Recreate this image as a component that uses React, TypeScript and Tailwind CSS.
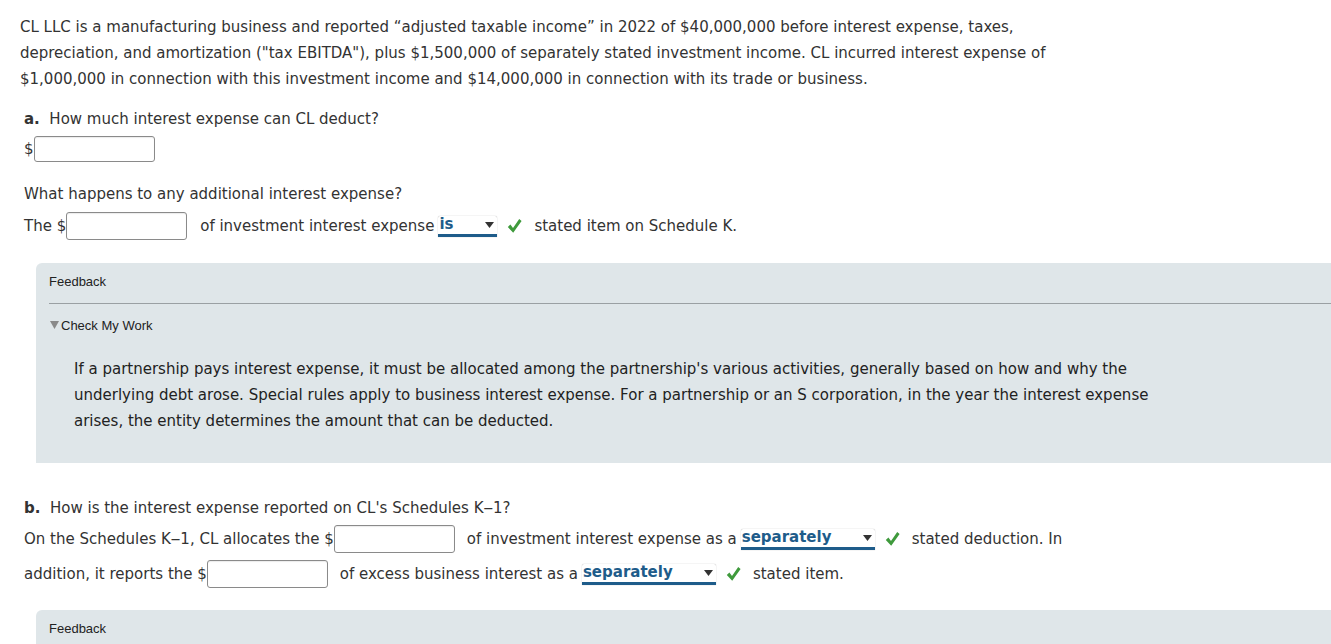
import { ReactNode } from 'react';

const bodyFont = { fontFamily: '"DejaVu Sans", Verdana, sans-serif' };

function AmountInput({ width = 'w-[121px]', height = 'h-[28px]' }: { width?: string; height?: string }) {
  return (
    <span className={`inline-block ${height} ${width} rounded-[3px] border border-[#8a8a8a] bg-white align-middle shadow-[inset_0_1px_1px_rgba(0,0,0,0.08)]`} />
  );
}

function Dropdown({ value, width }: { value: string; width: string }) {
  return (
    <span
      className={`inline-flex h-[21px] ${width} items-center justify-between rounded-t-[2px] border-b-[3px] border-[#1e5c8a] bg-white pr-[3px] align-middle shadow-[0_0_1px_rgba(0,0,0,0.4)]`}
    >
      <span className="pl-[1px] text-[15px] leading-none font-bold text-[#1e5c8a]">{value}</span>
      <svg width="9" height="6" viewBox="0 0 9 6" className="mt-[1px]">
        <path d="M0 0h9L4.5 6z" fill="#333" />
      </svg>
    </span>
  );
}

function Check() {
  return (
    <svg width="15" height="16" viewBox="0 0 15 16" className="mr-[12px] ml-[10px] inline-block align-middle">
      <path d="M0.8 9l2.6-2.4 2.6 3.3L12.2 1l2.4 1.9-8.4 11.8z" fill="#3f9a3c" />
    </svg>
  );
}

function FeedbackPanel({ children, open }: { children?: ReactNode; open?: boolean }) {
  return (
    <div className="ml-[36px] rounded-tl-[6px] bg-[#dfe6e9]" style={{ fontFamily: '"Liberation Sans", Arial, sans-serif' }}>
      <div className="px-[13px] pt-[9px] pb-[11px] text-[13px] text-[#222]">Feedback</div>
      {open && (
        <>
          <div className="ml-[13px] h-px bg-[#9aa0a3]" />
          <div className="flex items-center pt-[12px] pl-[14px] text-[13px] text-[#222]">
            <svg width="9" height="8" viewBox="0 0 9 8" className="mr-[2px]">
              <path d="M0 0h9L4.5 8z" fill="#8a8a8a" />
            </svg>
            Check My Work
          </div>
          {children}
        </>
      )}
    </div>
  );
}

export default function App() {
  return (
    <div className="min-h-screen bg-white pt-[14px] text-[15px] text-[#333]" style={bodyFont}>
      <p className="pr-[260px] pl-[20px] leading-[26px]">
        CL LLC is a manufacturing business and reported “adjusted taxable income” in 2022 of $40,000,000 before interest expense, taxes,
        depreciation, and amortization ("tax EBITDA"), plus $1,500,000 of separately stated investment income. CL incurred interest expense of
        $1,000,000 in connection with this investment income and $14,000,000 in connection with its trade or business.
      </p>

      <div className="mt-[16px] pl-[24px]">
        <div className="leading-[22px]">
          <span className="font-bold">a.</span>&nbsp; How much interest expense can CL deduct?
        </div>
        <div className="mt-[6px] flex items-center">
          <span>$</span>
          <AmountInput width="w-[121px]" height="h-[26px]" />
        </div>

        <div className="mt-[21px] leading-[22px]">What happens to any additional interest expense?</div>
        <div className="mt-[7px] flex items-center">
          <span>The $</span>
          <AmountInput />
          <span className="ml-[13px] mr-[4px]">of investment interest expense</span>
          <Dropdown value="is" width="w-[59px]" />
          <Check />
          <span>stated item on Schedule K.</span>
        </div>
      </div>

      <div className="mt-[23px]">
        <FeedbackPanel open>
          <div className="pt-[21px] pb-[29px] pr-[150px] pl-[38px] leading-[26px] text-[15px] text-[#222]" style={bodyFont}>
            If a partnership pays interest expense, it must be allocated among the partnership's various activities, generally based on how and why the
            underlying debt arose. Special rules apply to business interest expense. For a partnership or an S corporation, in the year the interest expense
            arises, the entity determines the amount that can be deducted.
          </div>
        </FeedbackPanel>
      </div>

      <div className="mt-[34px] pl-[24px]">
        <div className="leading-[22px]">
          <span className="font-bold">b.</span>&nbsp; How is the interest expense reported on CL's Schedules K‒1?
        </div>
        <div className="mt-[6px] flex items-center">
          <span>On the Schedules K‒1, CL allocates the $</span>
          <AmountInput />
          <span className="ml-[12px] mr-[4px]">of investment interest expense as a</span>
          <Dropdown value="separately" width="w-[134px]" />
          <Check />
          <span>stated deduction. In</span>
        </div>
        <div className="mt-[7px] flex items-center">
          <span>addition, it reports the $</span>
          <AmountInput />
          <span className="ml-[12px] mr-[4px]">of excess business interest as a</span>
          <Dropdown value="separately" width="w-[134px]" />
          <Check />
          <span>stated item.</span>
        </div>
      </div>

      <div className="mt-[22px]">
        <FeedbackPanel />
      </div>
    </div>
  );
}
